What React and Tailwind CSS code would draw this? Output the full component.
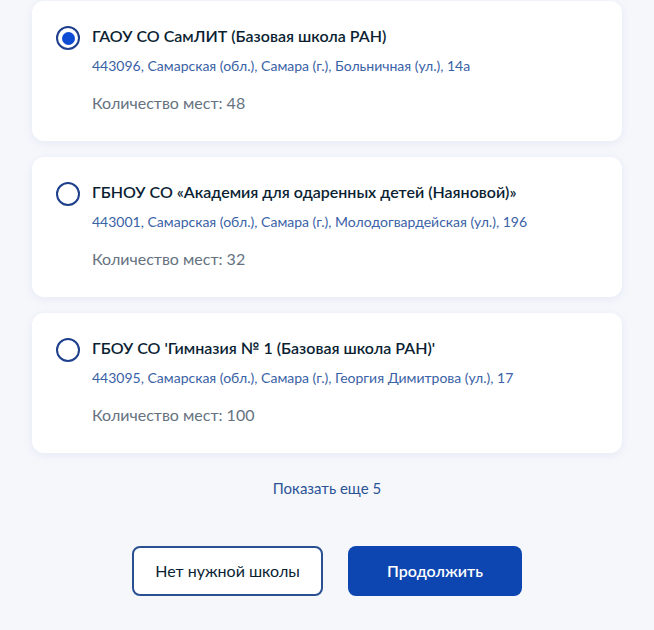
import React, { useState } from "react";

const schools = [
  {
    name: "ГАОУ СО СамЛИТ (Базовая школа РАН)",
    address: "443096, Самарская (обл.), Самара (г.), Больничная (ул.), 14а",
    seats: 48,
  },
  {
    name: "ГБНОУ СО «Академия для одаренных детей (Наяновой)»",
    address: "443001, Самарская (обл.), Самара (г.), Молодогвардейская (ул.), 196",
    seats: 32,
  },
  {
    name: "ГБОУ СО 'Гимназия № 1 (Базовая школа РАН)'",
    address: "443095, Самарская (обл.), Самара (г.), Георгия Димитрова (ул.), 17",
    seats: 100,
  },
];

function Radio({ checked }) {
  return (
    <span className="mt-[1px] flex h-6 w-6 shrink-0 items-center justify-center rounded-full border-2 border-[#1d3f8c]">
      {checked && <span className="h-[13px] w-[13px] rounded-full bg-[#0d4cd3]" />}
    </span>
  );
}

export default function App() {
  const [selected, setSelected] = useState(0);

  return (
    <div
      className="min-h-[630px] bg-[#f5f7fb] px-8 pt-px"
      style={{ fontFamily: "Lato, 'Noto Sans', sans-serif" }}
    >
      <div className="flex flex-col gap-4">
        {schools.map((s, i) => (
          <div
            key={i}
            onClick={() => setSelected(i)}
            className="flex h-[140px] cursor-pointer gap-3 rounded-xl bg-white px-6 pt-6 shadow-[0_2px_10px_rgba(160,180,215,0.18)]"
          >
            <Radio checked={selected === i} />
            <div className="flex flex-col">
              <div className="-mt-px text-[16px] font-semibold leading-6 text-[#0b1f33]">{s.name}</div>
              <div className="mt-2 text-[14px] leading-5 text-[#3a62a6]">{s.address}</div>
              <div className="mt-[17px] text-[16px] leading-5 text-[#66727f]">
                Количество мест: {s.seats}
              </div>
            </div>
          </div>
        ))}
      </div>

      <div className="mt-[25px] text-center text-[15px] leading-5 text-[#2b5396]">Показать еще 5</div>

      <div className="mt-12 flex justify-center gap-[25px]">
        <button className="h-[50px] w-[191px] rounded-lg border-2 border-[#2a5092] bg-white text-[16px] text-[#0b1f33]">
          Нет нужной школы
        </button>
        <button className="h-[50px] w-[174px] rounded-lg bg-[#0d46b0] text-[16px] font-semibold text-white">
          Продолжить
        </button>
      </div>
    </div>
  );
}
